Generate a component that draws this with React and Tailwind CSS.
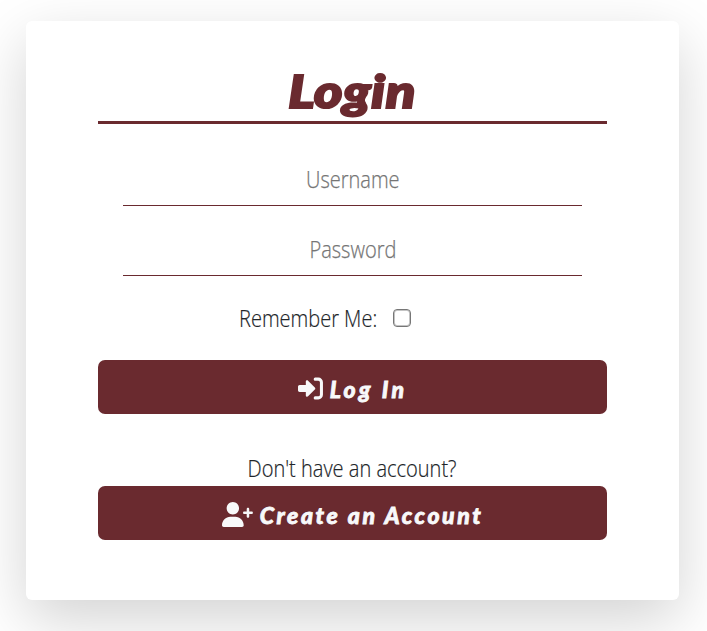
const display = "font-['Lato','Liberation_Sans',sans-serif] font-black italic";

function LoginIcon() {
  return (
    <svg viewBox="0 0 512 512" className="mb-[2px] size-[25px] fill-current" aria-hidden="true">
      <path d="M344.7 233L206 96C191 82 160 88 160 114v70H34c-19 0-34 15-34 34v76c0 19 15 34 34 34h126v70c0 26 31 32 46 18L344.7 279c13-13 13-33 0-46z" />
      <path d="M352 64h64c35 0 64 29 64 64v256c0 35-29 64-64 64h-64" fill="none" stroke="currentColor" strokeWidth="62" strokeLinecap="round" />
    </svg>
  );
}

function UserPlusIcon() {
  return (
    <svg viewBox="0 0 640 512" className="mb-[2px] h-[25px] w-[31px] fill-current" aria-hidden="true">
      <path d="M224 256c70.7 0 128-57.3 128-128S294.7 0 224 0 96 57.3 96 128s57.3 128 128 128zM274.7 304H173.3C77.6 304 0 381.6 0 477.3 0 496.5 15.5 512 34.7 512h378.7c19.1 0 34.6-15.5 34.6-34.7C448 381.6 370.4 304 274.7 304z" />
      <path d="M612 194h-50v-50c0-15-12-26-26-26s-26 11-26 26v50h-50c-15 0-26 12-26 26s11 26 26 26h50v50c0 15 12 26 26 26s26-11 26-26v-50h50c15 0 26-12 26-26s-11-26-26-26z" />
    </svg>
  );
}

function Field({ label, type, textClass }) {
  return (
    <label className="relative mx-[25px] flex h-[51px] items-center justify-center border-b border-[#6a2a2f] pb-[2px]">
      <input type={type} aria-label={label} className="absolute inset-0 bg-transparent outline-none" />
      <span className={`whitespace-nowrap text-[#757575] ${textClass}`}>{label}</span>
    </label>
  );
}

export default function App() {
  return (
    <main className="h-[631px] overflow-hidden bg-white px-[26px] pt-[21px] font-['Open_Sans','Liberation_Sans',sans-serif] font-light text-[#212529]">
      <section className="flex h-[579px] w-[653px] flex-col rounded-[6px] bg-white px-[72px] pt-[39px] shadow-[0_20px_60px_rgba(0,0,0,0.175)]">
        <h1 className={`flex h-[64px] justify-center border-b-3 border-[#6a2a2f] text-[46px] leading-[62px] text-[#6a2a2f] ${display}`}>
          <span className="scale-x-[1.18] tracking-[0.6px] [-webkit-text-stroke:2.2px_#6a2a2f]">Login</span>
        </h1>
        <form className="mt-[31px] flex flex-col">
          <Field label="Username" type="text" textClass="text-[23px] scale-x-[0.87] [-webkit-text-stroke:0.25px_#757575]" />
          <div className="h-[19px]" />
          <Field label="Password" type="password" textClass="text-[23px] scale-x-[0.87] [-webkit-text-stroke:0.25px_#757575]" />
          <div className="mt-[26px] flex h-[32px] items-center pl-[141px]">
            <label htmlFor="remember" className="w-[154px] origin-left scale-x-[0.87] whitespace-nowrap text-[23px] leading-8 [-webkit-text-stroke:0.2px_#212529]">Remember Me:</label>
            <input id="remember" type="checkbox" className="size-[18px] appearance-none rounded-[4px] border border-[#767676] bg-white shadow-[inset_0_0_0_1px_#c4c4c4]" />
          </div>
          <button type="button" className={`mt-[26px] flex h-[54px] items-center justify-center gap-[7px] rounded-[7px] bg-[#6a2a2f] pt-[4px] text-[23px] tracking-[3.2px] text-[#f8f9fa] ${display}`}>
            <LoginIcon />
            <span className="[-webkit-text-stroke:0.8px_#f8f9fa]">Log In</span>
          </button>
        </form>
        <p className="mt-[37px] flex h-[35px] items-center justify-center pb-[1px] text-[23px]">
          <span className="scale-x-[0.87] whitespace-nowrap [-webkit-text-stroke:0.2px_#212529]">Don't have an account?</span>
        </p>
        <button type="button" className={`flex h-[54px] items-center justify-center gap-[7px] rounded-[7px] bg-[#6a2a2f] pt-[4px] text-[23px] tracking-[2.6px] text-[#f8f9fa] ${display}`}>
          <UserPlusIcon />
          <span className="[-webkit-text-stroke:0.8px_#f8f9fa]">Create an Account</span>
        </button>
      </section>
    </main>
  );
}
